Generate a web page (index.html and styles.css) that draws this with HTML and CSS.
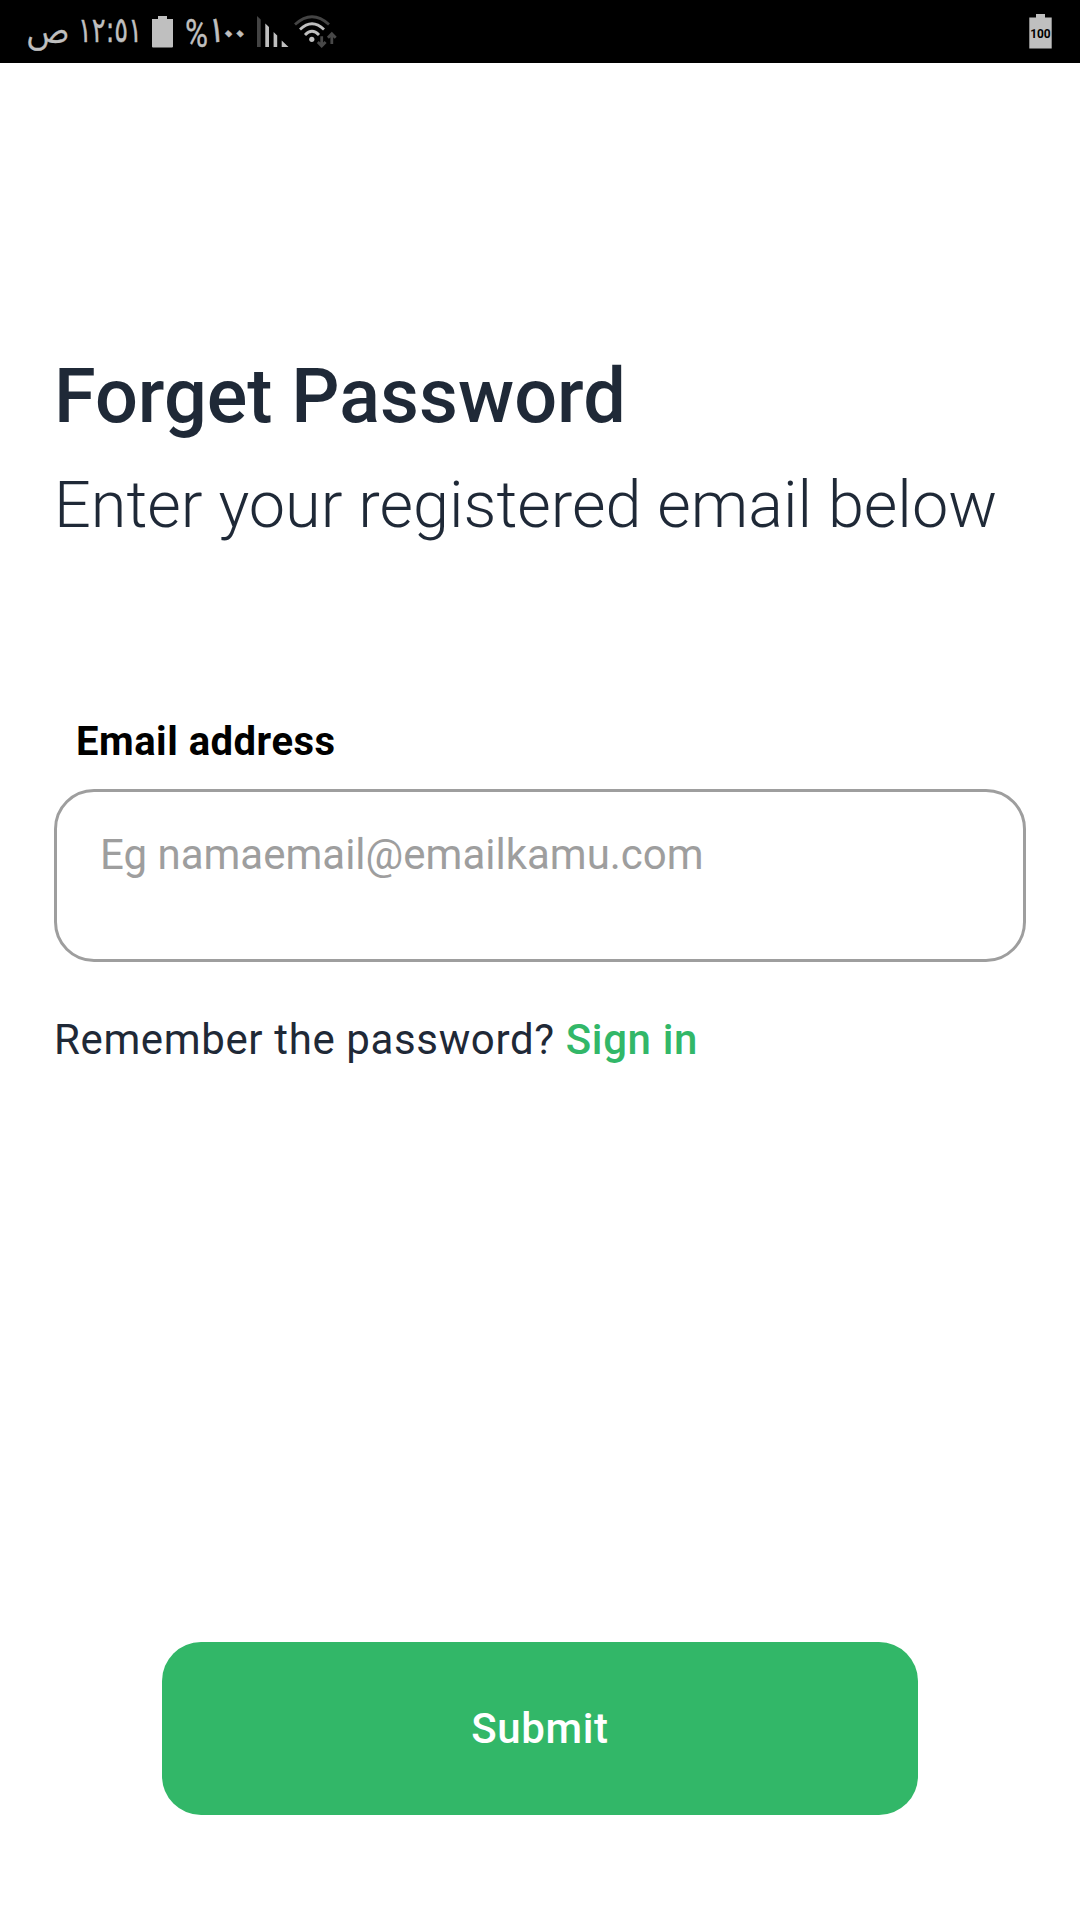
FILE: index.html
```html
<!DOCTYPE html>
<html lang="en">
<head>
<meta charset="utf-8">
<title>Forget Password</title>
<link rel="stylesheet" href="styles.css">
</head>
<body>
<header class="status">
  <svg class="clock" width="124" height="63" viewBox="0 0 124 63">
    <text class="period" x="-.5" y="42" textLength="41" lengthAdjust="spacingAndGlyphs">ص</text>
    <text class="time" x="50" y="42" textLength="64" lengthAdjust="spacingAndGlyphs">١٢:٥١</text>
  </svg>
  <svg class="battery" width="21" height="32" viewBox="0 0 21 32"><path d="M6 0h9v3h6v27.500a1 1 0 0 1-1 1H1a1 1 0 0 1-1-1V3h6z"/></svg>
  <svg class="percent" width="71" height="63" viewBox="0 0 71 63">
    <text class="sign" x="-1" y="46.500" textLength="23" lengthAdjust="spacingAndGlyphs">%</text>
    <text class="one" x="20.500" y="42">١</text>
    <text class="zero" x="30.500" y="46">٠</text>
    <text class="zero" x="42" y="46">٠</text>
  </svg>
  <svg class="signal" width="32" height="32" viewBox="0 0 32 32"><path class="dim" d="M0 0l3.700 3.500V31H0z"/><path d="M8.300 7.500l3.700 3.500V31H8.300zM16.600 16l3.600 3.500V31h-3.600zM24.700 24.500L31.500 31h-6.800z"/></svg>
  <svg class="wifi" width="44" height="34" viewBox="0 0 44 34">
    <g class="arcs"><path class="arc-dim" d="M1 9.500Q18-6 35 9.500"/><path d="M6 14.500Q18 3 30 14.500M11 20Q18 12.500 25 20"/></g>
    <circle cx="17.800" cy="24.300" r="2.600"/>
    <path class="arrows" d="M27.700 21.300V31M23.800 27l3.900 4 3.900-4M37.800 29V19M33.900 22.800l3.900-4 3.900 4"/>
  </svg>
  <svg class="level" width="23" height="35" viewBox="0 0 23 35"><path d="M7 0h9v3.500h6.700v31H.300v-31H7z"/><text x="1.200" y="24.300" textLength="20.500" lengthAdjust="spacingAndGlyphs">100</text></svg>
</header>
<main class="page">
  <h1 class="title">Forget Password</h1>
  <p class="subtitle">Enter your registered email below</p>
  <label class="label" for="email">Email address</label>
  <input class="field" id="email" type="email" placeholder="Eg namaemail@emailkamu.com">
  <p class="hint">Remember the password? <a class="link">Sign in</a></p>
  <button class="submit">Submit</button>
</main>
</body>
</html>
```
FILE: styles.css
```css
* { box-sizing: border-box; }
body { margin: 0; width: 1080px; height: 1920px; background: #fff; font-family: Roboto, sans-serif; color: #1f2937; }

.status { display: flex; height: 63px; background: #000; fill: #bfbfbf; padding-left: 28px; align-items: flex-start; }
.status svg { flex: none; overflow: visible; }
.status text { stroke: #bfbfbf; stroke-width: .4px; }
.status .period, .status .one { font: 34px "Noto Sans Arabic", sans-serif; }
.status .zero { font: 42px "Noto Sans Arabic", sans-serif; }
.status .time { font: 35px "DejaVu Sans", sans-serif; }
.status .sign { font: 38px Roboto, sans-serif; }
.battery { margin-top: 16px; }
.percent { margin-left: 13px; }
.signal { margin-top: 16px; }
.wifi { margin: 15px 0 0 5px; }
.arcs { fill: none; stroke: #bfbfbf; stroke-width: 2.8px; }
.arrows { fill: none; stroke: #484848; stroke-width: 2.8px; }
.level { margin: 14px 28px 0 auto; }
.status .level text { font: 700 13.5px Roboto, sans-serif; fill: #000; stroke: none; }
.dim { fill: #444; }
.arc-dim { stroke: #444; }

.page { display: flex; flex-direction: column; padding: 289px 54px 0; height: 1857px; white-space: nowrap; }
.title { margin: 0; font-size: 75.7px; font-weight: 500; line-height: 88px; }
.subtitle { margin: 21px 0 0; font-size: 64.8px; font-weight: 300; line-height: 88px; }
.label { margin: 169px 0 0 22px; font-size: 40px; font-weight: 700; letter-spacing: .5px; color: #000; line-height: 48px; }
.field { width: 100%; margin-top: 23px; height: 173px; flex: none; border: 3px solid #9e9e9e; border-radius: 40px; padding: 0 43px 42px; font: 42px Roboto, sans-serif; background: #fff; }
.field::placeholder { color: #9e9e9e; opacity: 1; }
.hint { margin: 53px 0 0; font-size: 42px; letter-spacing: .63px; line-height: 50px; }
.link { color: #32b768; font-weight: 500; }
.submit { margin: auto 108px 105px; height: 173px; border: 0; border-radius: 39px; background: #32b768; color: #fff; font: 500 42px Roboto, sans-serif; letter-spacing: .63px; }
```
